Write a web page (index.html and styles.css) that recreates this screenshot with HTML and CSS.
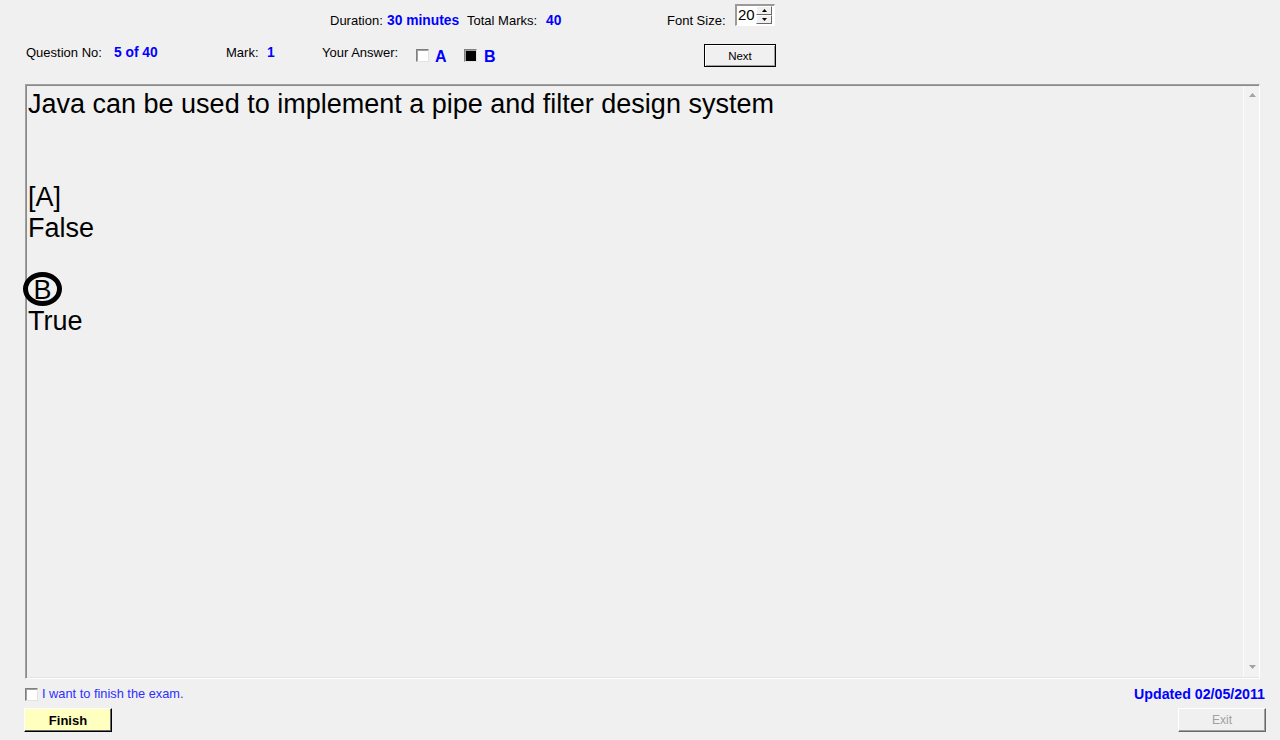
FILE: index.html
```html
<!DOCTYPE html>
<html>
<head>
<meta charset="utf-8">
<title>Exam</title>
<link rel="stylesheet" href="styles.css">
</head>
<body>
<div class="page">
  <header class="hdr">
    <div class="row row1">
      <span class="lbl w-dur">Duration:</span>
      <span class="val w-min">30 minutes</span>
      <span class="lbl w-tot">Total Marks:</span>
      <span class="val w-40">40</span>
      <span class="lbl w-fs">Font Size:</span>
      <div class="spin">
        <span class="spin-val">20</span>
        <div class="spin-btns">
          <span class="sb"><svg width="5" height="3" viewBox="0 0 5 3"><path d="M2.5 0 L5 3 L0 3 Z" fill="#000"/></svg></span>
          <span class="sb"><svg width="5" height="3" viewBox="0 0 5 3"><path d="M0 0 L5 0 L2.5 3 Z" fill="#000"/></svg></span>
        </div>
      </div>
    </div>
    <div class="row row2">
      <span class="lbl w-qn">Question No:</span>
      <span class="val w-5of">5 of 40</span>
      <span class="lbl w-mark">Mark:</span>
      <span class="val w-1">1</span>
      <span class="lbl w-ya">Your Answer:</span>
      <span class="chk chk-a"></span>
      <span class="opt w-a">A</span>
      <span class="chk chk-b checked"></span>
      <span class="opt w-b">B</span>
      <button class="btn-next">Next</button>
    </div>
  </header>

  <main class="qbox">
    <div class="qtext">
      <div class="ln">Java can be used to implement a pipe and filter design system</div>
      <div class="ln"></div>
      <div class="ln"></div>
      <div class="ln">[A]</div>
      <div class="ln">False</div>
      <div class="ln"></div>
      <div class="ln"><span class="ring">B</span></div>
      <div class="ln">True</div>
    </div>
    <div class="vscroll">
      <svg class="arr-up" width="7" height="4" viewBox="0 0 7 4"><path d="M3.5 0 L7 4 L0 4 Z" fill="#a3a3a3"/></svg>
      <svg class="arr-dn" width="7" height="4" viewBox="0 0 7 4"><path d="M0 0 L7 0 L3.5 4 Z" fill="#a3a3a3"/></svg>
    </div>
  </main>

  <footer class="foot">
    <div class="foot-left">
      <div class="finline">
        <span class="chk"></span>
        <span class="fintext">I want to finish the exam.</span>
      </div>
      <button class="btn-finish">Finish</button>
    </div>
    <div class="foot-right">
      <div class="updated">Updated 02/05/2011</div>
      <button class="btn-exit" disabled>Exit</button>
    </div>
  </footer>
</div>
</body>
</html>
```

FILE: styles.css
```css
* { box-sizing: border-box; }
html, body { margin: 0; padding: 0; }
body {
  background: #f0f0f0;
  font-family: "Liberation Sans", Arial, sans-serif;
  color: #000;
  width: 1280px;
  height: 740px;
  overflow: hidden;
}
.page { width: 1280px; height: 740px; }

.row { display: flex; align-items: flex-start; white-space: nowrap; }
.row1 { height: 36px; padding-left: 330px; }
.row2 { height: 48px; padding-left: 26px; }

.lbl { font-size: 13px; line-height: 15px; }
.val { font-size: 13.8px; line-height: 15px; font-weight: bold; color: #0000ff; }
.row1 .lbl, .row1 .val { margin-top: 13px; }
.row2 .lbl, .row2 .val { margin-top: 9px; }

.w-dur { width: 57px; }
.w-min { width: 80px; }
.w-tot { width: 79px; }
.w-40 { width: 121px; }
.w-fs { width: 68px; }

.w-qn { width: 88px; }
.w-5of { width: 112px; }
.w-mark { width: 41px; }
.w-1 { width: 55px; }
.w-ya { width: 94px; }

.spin {
  margin-top: 4px;
  width: 40px;
  height: 22px;
  background: #fff;
  border-top: 2px solid #9a9a9a;
  border-left: 2px solid #9a9a9a;
  border-right: 1px solid #fff;
  border-bottom: 1px solid #fff;
  display: flex;
  align-items: flex-start;
}
.spin-val {
  font-size: 15px;
  line-height: 18px;
  padding-left: 1px;
  width: 19px;
}
.spin-btns { display: flex; flex-direction: column; }
.sb {
  width: 16px;
  height: 9px;
  background: #f0f0f0;
  border-top: 1px solid #fff;
  border-left: 1px solid #fff;
  border-right: 1px solid #696969;
  border-bottom: 1px solid #696969;
  display: flex;
  align-items: center;
  justify-content: center;
}

.chk {
  display: inline-block;
  width: 13px;
  height: 13px;
  background: #fff;
  border: 1px solid;
  border-color: #808080 #e3e3e3 #e3e3e3 #808080;
  box-shadow: inset 1px 1px #a0a0a0;
}
.chk.checked { background: #000; }
.row2 .chk { margin-top: 13px; }
.chk-a { margin-right: 6px; }
.chk-b { margin-right: 7px; }
.opt {
  font-size: 16px;
  line-height: 18px;
  font-weight: bold;
  color: #0000ff;
  margin-top: 11.5px;
}
.w-a { width: 29px; }
.w-b { width: 220px; }

button {
  font-family: "Liberation Sans", Arial, sans-serif;
  padding: 0;
  margin: 0;
  cursor: default;
}
.btn-next {
  margin-top: 8px;
  width: 72px;
  height: 23px;
  background: #f0f0f0;
  border: 1px solid #000;
  box-shadow: inset 1px 1px #fff, inset -1px -1px #a0a0a0;
  font-size: 11.5px;
  color: #000;
}

.qbox {
  margin-left: 25px;
  width: 1235px;
  height: 595px;
  border: 1px solid;
  border-color: #a0a0a0 #fff #fff #a0a0a0;
  box-shadow: inset 1px 1px #8a8a8a, inset -1px -1px #e3e3e3;
  display: flex;
  background: #f0f0f0;
}
.qtext {
  flex: 1;
  padding: 4px 0 0 2px;
  font-size: 27px;
  line-height: 31px;
  white-space: nowrap;
}
.ln { height: 31px; }
.ring {
  display: inline-block;
  vertical-align: top;
  margin-top: -3px;
  margin-left: -5px;
  width: 39px;
  height: 34px;
  line-height: 27.4px;
  border: 5px solid #000;
  border-radius: 50%;
  text-align: center;
}
.vscroll {
  width: 16px;
  margin: 1px 0 1px 0;
  background: #f2f2f2;
  border-left: 1px solid #fbfbfb;
  display: flex;
  flex-direction: column;
  align-items: center;
  justify-content: space-between;
  padding: 7px 0 8px 1px;
}

.foot {
  display: flex;
  justify-content: space-between;
  padding: 0 14px 0 24px;
}
.foot-left, .foot-right { display: flex; flex-direction: column; }
.foot-right { align-items: flex-end; }
.finline {
  margin-top: 8px;
  height: 14px;
  display: flex;
  align-items: center;
}
.finline .chk { margin-left: 1px; margin-right: 4px; }
.fintext {
  font-size: 12.8px;
  line-height: 14px;
  color: #2f2fff;
  white-space: nowrap;
}
.btn-finish {
  margin-top: 7px;
  width: 88px;
  height: 24px;
  background: #ffffc0;
  border: 1px solid;
  border-color: #fff #000 #000 #fff;
  box-shadow: inset -1px -1px #696969;
  font-size: 13px;
  font-weight: bold;
  color: #000;
}
.updated {
  margin-top: 8px;
  margin-right: 1px;
  height: 14px;
  font-size: 14.2px;
  line-height: 14px;
  font-weight: bold;
  color: #0000ff;
  white-space: nowrap;
}
.btn-exit {
  margin-top: 7px;
  width: 88px;
  height: 24px;
  background: #f0f0f0;
  border: 1px solid;
  border-color: #fff #696969 #696969 #fff;
  box-shadow: inset -1px -1px #a0a0a0;
  font-size: 12px;
  color: #a0a0a0;
}
```
